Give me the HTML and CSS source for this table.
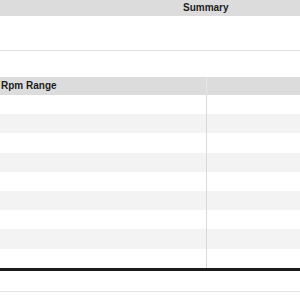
FILE: index.html
```html
<!DOCTYPE html>
<html lang="en">
<head>
<meta charset="utf-8">
<title>Summary</title>
<link rel="stylesheet" href="styles.css">
</head>
<body>
<div class="page">
  <div class="summary-head">Summary</div>
  <div class="summary-body"></div>
  <div class="grid">
    <div class="row head"><div class="cell left">Rpm Range</div><div class="cell right"></div></div>
    <div class="row"><div class="cell left"></div><div class="cell right"></div></div>
    <div class="row alt"><div class="cell left"></div><div class="cell right"></div></div>
    <div class="row"><div class="cell left"></div><div class="cell right"></div></div>
    <div class="row alt"><div class="cell left"></div><div class="cell right"></div></div>
    <div class="row"><div class="cell left"></div><div class="cell right"></div></div>
    <div class="row alt"><div class="cell left"></div><div class="cell right"></div></div>
    <div class="row"><div class="cell left"></div><div class="cell right"></div></div>
    <div class="row alt"><div class="cell left"></div><div class="cell right"></div></div>
    <div class="row"><div class="cell left"></div><div class="cell right"></div></div>
  </div>
  <div class="footer"></div>
</div>
</body>
</html>
```
FILE: styles.css
```css
html, body {
  margin: 0;
  padding: 0;
  background: #ffffff;
}
body {
  font-family: "Liberation Sans", Arial, sans-serif;
  color: #1e1e1e;
  width: 300px;
  height: 300px;
  overflow: hidden;
}
.summary-head {
  height: 16px;
  line-height: 16px;
  background: #dcdcdc;
  font-weight: bold;
  font-size: 10px;
  padding-left: 183px;
}
.summary-body {
  height: 34px;
  border-bottom: 1px solid #e0e0e0;
}
.grid {
  margin-top: 26px;
  border-bottom: 3px solid #1c1c1c;
}
.row {
  display: flex;
  height: 19.2px;
}
.row.head {
  height: 18px;
  background: #dcdcdc;
  font-weight: bold;
  font-size: 10px;
  line-height: 18px;
}
.row.alt {
  background: #f3f3f3;
}
.cell.left {
  width: 205px;
  padding-left: 1px;
  border-right: 1px solid #dadada;
}
.row.head .cell.left {
  border-right-color: #e6e6e6;
}
.cell.right {
  flex: 1;
}
.footer {
  height: 20px;
  border-bottom: 1px solid #e2e2e2;
}
```
